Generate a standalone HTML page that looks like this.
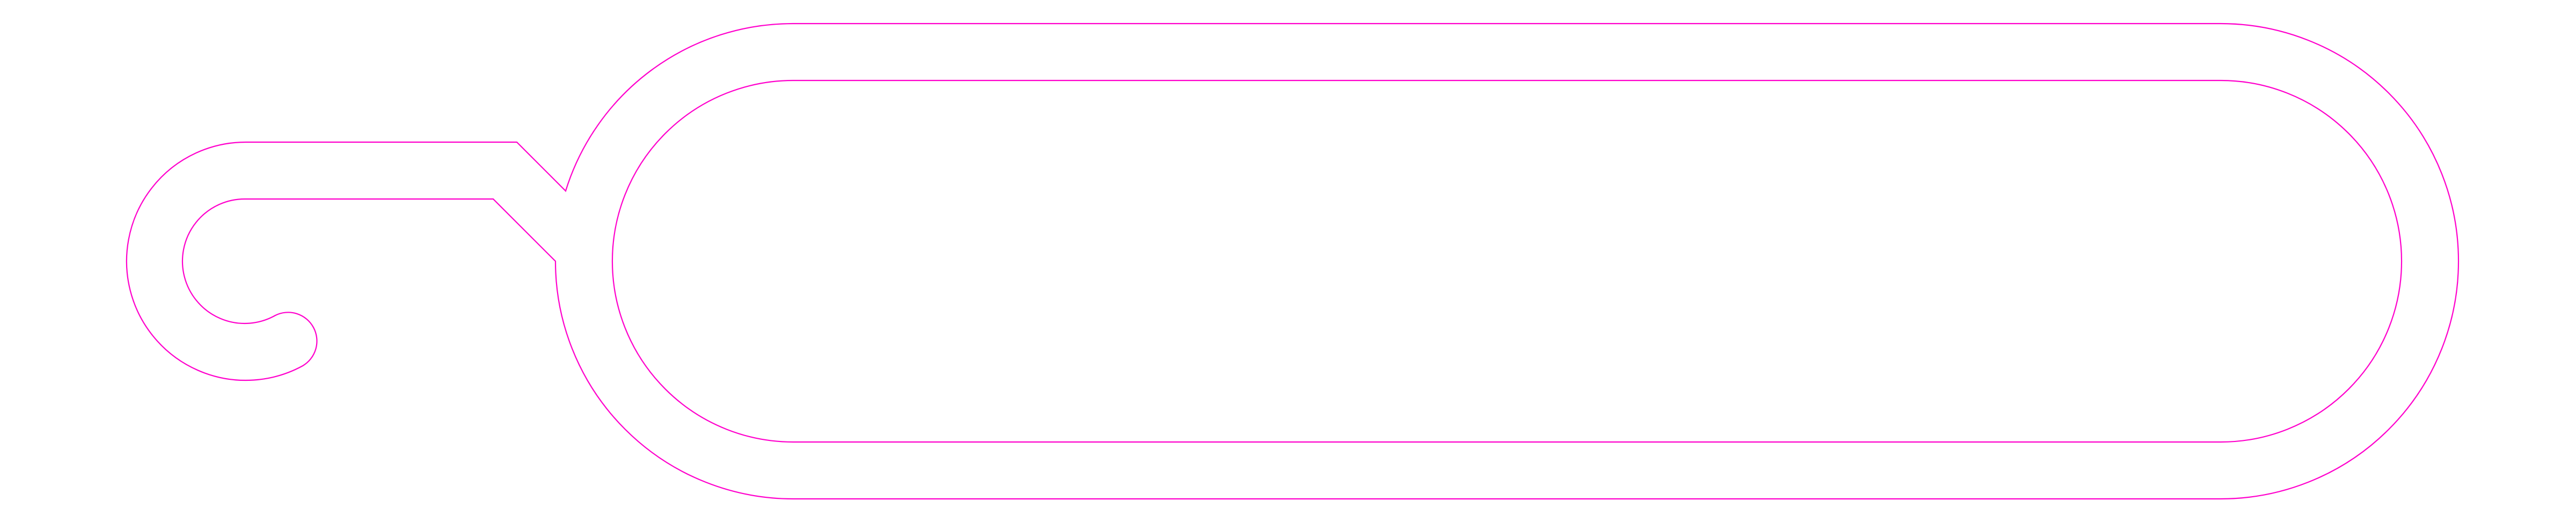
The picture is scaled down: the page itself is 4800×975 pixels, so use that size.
<!DOCTYPE html>
<html>
<head>
<meta charset="utf-8">
<style>
  html,body{margin:0;padding:0;background:#ffffff;}
  body{width:4800px;height:975px;overflow:hidden;}
  svg{display:block;}
</style>
</head>
<body>
<svg width="4800" height="975" viewBox="0 0 4800 975" xmlns="http://www.w3.org/2000/svg">
  <g fill="none" stroke="#ff00cc" stroke-width="2.2" stroke-linejoin="miter">
    <path d="M564 682 A222 222 0 1 1 458 265 L963 265 L1054 356 A443 443 0 0 1 1478 44 L4138 44 A443 443 0 0 1 4138 930 L1478 930 A443 443 0 0 1 1035 487 L919 371 L458 371 A116 116 0 1 0 513 588 A53.5 53.5 0 0 1 564 682 Z"/>
    <path d="M1478 150 L4138 150 A337 337 0 0 1 4138 824 L1478 824 A337 337 0 0 1 1478 150 Z"/>
  </g>
</svg>
</body>
</html>
